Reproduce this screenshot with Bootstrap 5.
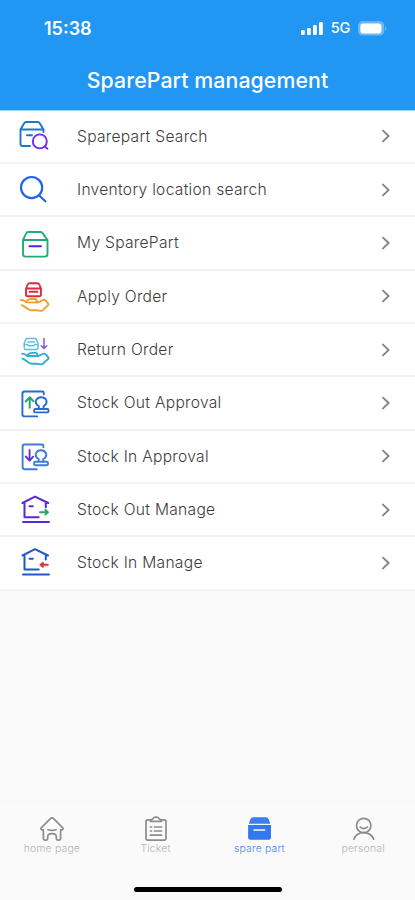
<!DOCTYPE html>
<html lang="en">
<head>
<meta charset="utf-8">
<meta name="viewport" content="width=device-width, initial-scale=1">
<title>SparePart management</title>
<link rel="stylesheet" href="https://cdn.jsdelivr.net/npm/bootstrap@5.3.0/dist/css/bootstrap.min.css">
<style>
body{font-family:Inter,"Liberation Sans",sans-serif;background:#fafafa;overflow:hidden}
svg{fill:none;stroke-linecap:round;stroke-linejoin:round;stroke-width:1.9;display:block;flex:none}
.screen{height:900px}
.top-area{height:110.7px;background:#2196f3;border-bottom:1px solid #a6d3fa;flex:none}
.status{height:56px;padding:0 28px 0 44px}
.clock{font-size:18px;font-weight:600;letter-spacing:0}
.signal{font-size:14.5px;font-weight:500;letter-spacing:-.3px}
.title{font-size:21.3px;font-weight:500;line-height:48px;letter-spacing:.08px}
.menu-row{height:53.333px;padding:0 23px 0 19px;border-bottom:2px solid #f2f2f2;color:#3c3c3c;background:#fff;text-decoration:none}
.menu-row .label{font-size:15.6px;font-weight:300;margin-left:26px;letter-spacing:.29px}
.tabs{height:99px;padding-top:14px;border-top:1px solid #f7f7f7;background:#fafafa}
.tab{width:25%;color:#b4b4b4;text-decoration:none;font-size:10.4px;font-weight:300;line-height:11px;letter-spacing:.2px}
.tab svg{stroke:#8c8c8c;stroke-width:1.7}
.tab.current{color:#4a80fa}
.home-bar{width:148px;height:5px;background:#000;margin-top:33px}
</style>
<script src="https://cdn.jsdelivr.net/npm/bootstrap@5.3.0/dist/js/bootstrap.bundle.min.js"></script>
</head>
<body>
<div class="screen d-flex flex-column">
<header class="top-area text-white">
  <div class="status d-flex align-items-center justify-content-between">
    <span class="clock">15:38</span>
    <div class="d-flex align-items-center">
      <svg width="22" height="15" viewBox="0 0 22 15"><g fill="#fff"><rect x="0" y="9" width="3.8" height="5" rx="1.2"/><rect x="6" y="7" width="3.8" height="7" rx="1.2"/><rect x="12" y="4" width="3.8" height="10" rx="1.2"/><rect x="18" y="1" width="3.8" height="13" rx="1.2"/></g></svg>
      <span class="signal ms-2 me-2">5G</span>
      <svg width="29" height="15" viewBox="0 0 29 15"><rect x=".6" y=".8" width="25" height="13.2" rx="4" fill="#6bb9f7" stroke="#6bb9f7" stroke-width="1.2"/><rect x="2.4" y="2.4" width="21" height="10" rx="2.6" fill="#fff"/><path d="M27.3 5.4c1.4.8 1.4 3.2 0 4z" fill="#83c4f9"/></svg>
    </div>
  </div>
  <div class="title text-center">SparePart management</div>
</header>
<main class="flex-grow-1">
  <a href="#" class="menu-row d-flex align-items-center"><svg width="32" height="32" viewBox="0 0 32 32"><g stroke="#1976d2"><path d="M11 26H3.5Q1.5 26 1.5 24V9.5L5 3.5Q5.8 2 7.5 2h11q1.6 0 2.4 1.5L24.5 9.5V12M1.5 9.5h23M8 15.3h5"/></g><g stroke="#7a28e8"><circle cx="20.8" cy="21.4" r="7"/><path d="M25.8 26.5l2.6 2.2"/></g></svg><span class="label">Sparepart Search</span><svg class="ms-auto" width="12" height="16" viewBox="0 0 12 16"><path d="M3 2.6l5.6 5.4L3 13.4" stroke="#858585"/></svg></a>
  <a href="#" class="menu-row d-flex align-items-center"><svg width="32" height="32" viewBox="0 0 32 32"><g stroke="#2463e5" stroke-width="2.2"><circle cx="12.6" cy="13.6" r="10.6"/><path d="M20 21.3l6.4 6"/></g></svg><span class="label">Inventory location search</span><svg class="ms-auto" width="12" height="16" viewBox="0 0 12 16"><path d="M3 2.6l5.6 5.4L3 13.4" stroke="#858585"/></svg></a>
  <a href="#" class="menu-row d-flex align-items-center"><svg width="32" height="32" viewBox="0 0 32 32"><path d="M4 13L7 6.6Q7.7 5 9.5 5h12q1.7 0 2.5 1.6L28.5 13V27q0 2.6-2.6 2.6H6.6Q4 29.6 4 27zM4 13h24.5" stroke="#25aa77"/><path d="M10.5 19.3h11.5" stroke="#5324d9"/></svg><span class="label">My SparePart</span><svg class="ms-auto" width="12" height="16" viewBox="0 0 12 16"><path d="M3 2.6l5.6 5.4L3 13.4" stroke="#858585"/></svg></a>
  <a href="#" class="menu-row d-flex align-items-center"><svg width="32" height="32" viewBox="0 0 32 32"><path d="M7 8.5l1.7-4Q9.2 3.2 10.5 3.2h8q1.3 0 1.8 1.3l1.7 4v6q0 1.8-1.8 1.8H8.8Q7 16.3 7 14.5zM7 8.5h15M10.5 11.8h8" stroke="#d62e40" stroke-width="1.9"/><path d="M2 20.2c1.8-.6 3.5.6 5.2 2.2h3.6M10.8 22.4h5.5c2 0 2-3.3 0-3.4h-4.2c-2.5 0-3.2.8-4.2 1.6M17.8 22.6c2.4-.1 5-2.7 7.4-2.9 1.4 0 1.7 1.2 3.8 3.7.8 1.3.6 1.8-.6 2.5l-5 4.5c-1.8 1.4-3.3-.2-6.2-.2h-5.4c-3.7-.1-5.7-4.5-9-5.1" stroke="#eea02c" stroke-width="1.9"/></svg><span class="label">Apply Order</span><svg class="ms-auto" width="12" height="16" viewBox="0 0 12 16"><path d="M3 2.6l5.6 5.4L3 13.4" stroke="#858585"/></svg></a>
  <a href="#" class="menu-row d-flex align-items-center"><svg width="32" height="32" viewBox="0 0 32 32"><path d="M5.2 9l1.6-3.5Q7.2 4.6 8.4 4.6h7.4q1.2 0 1.6.9L19 9v4.8q0 1.6-1.6 1.6H6.8q-1.6 0-1.6-1.6zM5.2 10.4h3.3q.4 1.4 1.6 1.4h4q1.2 0 1.6-1.4H19M9 8h6.3" stroke="#61bddc" stroke-width="1.5"/><path d="M25 4.5v10M22.3 11.8L25 14.6l2.7-2.8" stroke="#8055df" stroke-width="1.5"/><path d="M3 19.8c1.8-.6 3.5.6 5.2 2.2h3.6M11.8 22h5c2 0 2-3 0-3.1h-3.7c-2.5 0-3.2.7-4.2 1.5M18.2 22.3c2.4-.1 4.6-2.5 7-2.7 1.4 0 1.7 1 3.9 3.4.8 1.2.6 1.7-.6 2.4l-4.6 4.4c-1.8 1.5-3.3 0-6.2 0h-5c-3.7 0-6.1-4.8-9.3-5.2" stroke="#2caed0" stroke-width="1.9"/></svg><span class="label">Return Order</span><svg class="ms-auto" width="12" height="16" viewBox="0 0 12 16"><path d="M3 2.6l5.6 5.4L3 13.4" stroke="#858585"/></svg></a>
  <a href="#" class="menu-row d-flex align-items-center"><svg width="32" height="32" viewBox="0 0 32 32"><path d="M24.8 7.2V6q0-1.5-1.5-1.5H5.5Q3.4 4.5 3.4 7v20.2q0 2.2 2.2 2.2h12.5M16.4 22q-1.3 0-1.3 1.2v1q0 1.2 1.2 1.2h12q1.2 0 1.2-1.2v-1q0-1.2-1.3-1.2zM19.8 21.8v-2.6c-5.3-3.2-2.8-8.9 2.4-8.9s7.7 5.7 2.4 8.9v2.6" stroke="#2869d1"/><path d="M10.7 20.7V10.5M6.7 14.5l4-4.2 3.8 4" stroke="#25a869" stroke-width="2"/></svg><span class="label">Stock Out Approval</span><svg class="ms-auto" width="12" height="16" viewBox="0 0 12 16"><path d="M3 2.6l5.6 5.4L3 13.4" stroke="#858585"/></svg></a>
  <a href="#" class="menu-row d-flex align-items-center"><svg width="32" height="32" viewBox="0 0 32 32"><path d="M24.4 7.2V6q0-1.5-1.5-1.5H5.5Q3.6 4.5 3.6 7v20q0 2.2 2.2 2.2h12M16.4 21.8q-1.3 0-1.3 1.2v1q0 1.2 1.2 1.2h11.5q1.2 0 1.2-1.2v-1q0-1.2-1.3-1.2zM19.7 21.6V19c-5.3-3.2-2.8-8.7 2.3-8.7s7.6 5.5 2.3 8.7v2.6" stroke="#3d7bd9"/><path d="M10.6 10v10.5M6.8 16.5l3.8 4.2 3.6-4" stroke="#6531dc"/></svg><span class="label">Stock In Approval</span><svg class="ms-auto" width="12" height="16" viewBox="0 0 12 16"><path d="M3 2.6l5.6 5.4L3 13.4" stroke="#858585"/></svg></a>
  <a href="#" class="menu-row d-flex align-items-center"><svg width="32" height="32" viewBox="0 0 32 32"><path d="M3.5 9L16 2.6 29.2 9M5.5 9v14.3h14.2M26.8 9v4.2M10.5 12.3h3.3M4 28h26" stroke="#5729d8" stroke-width="2"/><path d="M21 18.2h8M26.3 15.8l2.6 2.4-2.6 2.4" stroke="#28a66e"/></svg><span class="label">Stock Out Manage</span><svg class="ms-auto" width="12" height="16" viewBox="0 0 12 16"><path d="M3 2.6l5.6 5.4L3 13.4" stroke="#858585"/></svg></a>
  <a href="#" class="menu-row d-flex align-items-center"><svg width="32" height="32" viewBox="0 0 32 32"><path d="M3.5 8.5L16 2.2l13 6.3M5.5 8.5v14.1h14.2M26.8 8.5v4M10.5 11.8h3.3M4 27.4h26" stroke="#1e58ca" stroke-width="2"/><path d="M21.5 17.8h7.3M24 16l-2.3 1.8L24 19.6" stroke="#d93838" stroke-width="2.1"/></svg><span class="label">Stock In Manage</span><svg class="ms-auto" width="12" height="16" viewBox="0 0 12 16"><path d="M3 2.6l5.6 5.4L3 13.4" stroke="#858585"/></svg></a>
</main>
<footer class="tabs">
  <nav class="d-flex">
    <a href="#" class="tab d-flex flex-column align-items-center"><svg width="28" height="27" viewBox="0 0 28 27"><path d="M3.2 11.8L12.4 2.6q1.6-1.5 3.2 0l9.2 9.2q1 1.8-1.4 2h-.8v8.8q0 1.5-1.5 1.5h-1.4q-1.4 0-1.4-1.5v-1.8c0-4.3-8.6-4.3-8.6 0v1.8q0 1.5-1.4 1.5H6.9q-1.5 0-1.5-1.5v-8.8h-.8q-2.4-.2-1.4-2zM10 13.7q4 1.2 8 0"/></svg>home page</a>
    <a href="#" class="tab d-flex flex-column align-items-center"><svg width="28" height="27" viewBox="0 0 28 27"><path d="M9 3.8H5.7Q4 3.8 4 5.6v16.7q0 1.8 1.8 1.8h16.4q1.8 0 1.8-1.8V5.6q0-1.8-1.8-1.8H19M8.5 5.4c0-2 2-2 2.4-2.8 1-2 5.2-2 6.2 0 .4.8 2.4.8 2.4 2.8zM8.5 11h1M12.5 11h7M8.5 15h1M12.5 15h7M8.5 19.2h11"/></svg>Ticket</a>
    <a href="#" class="tab current d-flex flex-column align-items-center"><svg width="28" height="27" viewBox="0 0 28 27"><path d="M8 1.3h13.1q1.8 0 2.6 2l1.6 4.4H3.8l1.6-4.4q.8-2 2.6-2z" fill="#3c7df2" stroke="none"/><path d="M3.1 9h22.9v12.2q0 2.5-2.5 2.5H5.6q-2.5 0-2.5-2.5z" fill="#3378f1" stroke="none"/><path d="M9.2 14h10.4" stroke="#fff"/></svg>spare part</a>
    <a href="#" class="tab d-flex flex-column align-items-center"><svg width="28" height="27" viewBox="0 0 28 27"><circle cx="14.7" cy="9.5" r="7.2"/><path d="M11.2 11q3.5 3.3 7 0M4.9 23.2c1.5-3.8 4.5-6.5 9.8-6.5s8.3 2.7 10 6.5"/></svg>personal</a>
  </nav>
  <div class="home-bar rounded-pill mx-auto"></div>
</footer>
</div>
</body>
</html>
